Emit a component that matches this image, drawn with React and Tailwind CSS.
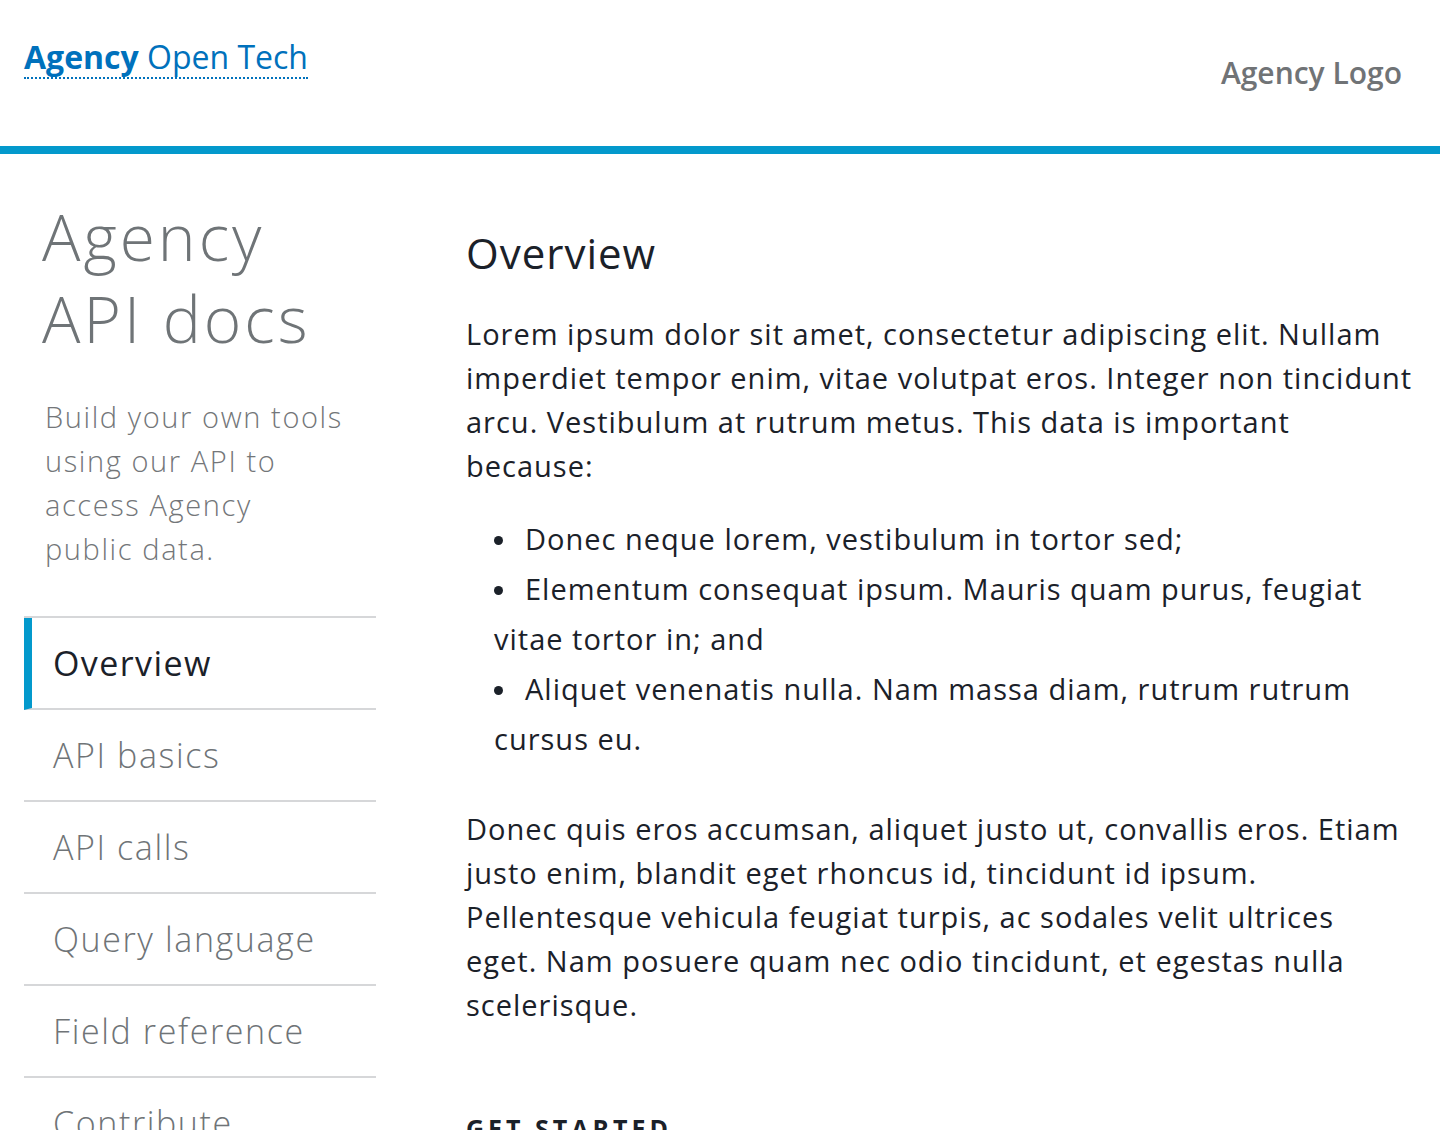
import React from "react";

const navItems = [
  "Overview",
  "API basics",
  "API calls",
  "Query language",
  "Field reference",
  "Contribute",
];

const bullets = [
  "Donec neque lorem, vestibulum in tortor sed;",
  "Elementum consequat ipsum. Mauris quam purus, feugiat vitae tortor in; and",
  "Aliquet venenatis nulla. Nam massa diam, rutrum rutrum cursus eu.",
];

export default function App() {
  return (
    <div className="min-h-[1130px] bg-white font-['Open_Sans',sans-serif] text-[#1b2129]">
      {/* Header */}
      <header className="flex h-[146px] items-start justify-between px-6">
        <a
          href="#"
          className="mt-[38px] border-b-2 border-dotted border-[#0071bc] pb-[1px] text-[32px] leading-[38px] text-[#0071bc]"
        >
          <span className="font-bold">Agency</span> Open Tech
        </a>
        <div className="mr-[14px] mt-[54px] text-[30px] font-semibold leading-[38px] text-[#707376]">
          Agency Logo
        </div>
      </header>
      <div className="h-2 bg-[#0399cc]" />

      <div className="flex gap-[90px] px-6">
        {/* Sidebar */}
        <aside className="w-[352px] shrink-0">
          <h1 className="mt-[42px] pl-[18px] text-[64px] font-light leading-[82px] tracking-[3px] text-[#6f7477]">
            Agency
            <br />
            API docs
          </h1>
          <p className="mt-[35px] pl-[21px] pr-[32px] text-[29px] font-light leading-[44px] tracking-[1.6px] text-[#737679]">
            Build your own tools using our API to access Agency public data.
          </p>
          <nav className="mt-[45px] border-t-2 border-[#d6d7d9]">
            {navItems.map((item, i) => (
              <a
                key={item}
                href="#"
                className={
                  i === 0
                    ? "flex h-[92px] items-center border-b-2 border-l-8 border-[#d6d7d9] border-l-[#0399cc] pl-[21px] text-[34px] tracking-[1.4px] text-[#1b2129]"
                    : "flex h-[92px] items-center border-b-2 border-[#d6d7d9] pl-[29px] text-[34px] font-light tracking-[1.6px] text-[#6f7477]"
                }
              >
                {item}
              </a>
            ))}
          </nav>
        </aside>

        {/* Main content */}
        <main className="min-w-0 flex-1 pr-[3px] pt-[72px] tracking-[1px]">
          <h2 className="text-[42px] leading-[54px]">Overview</h2>
          <p className="mt-[32px] text-[29px] leading-[44px]">
            Lorem ipsum dolor sit amet, consectetur adipiscing elit. Nullam
            imperdiet tempor enim, vitae volutpat eros. Integer non tincidunt
            arcu. Vestibulum at rutrum metus. This data is important because:
          </p>
          <ul className="mt-[26px] pl-[28px] text-[29px] leading-[50px]">
            {bullets.map((b) => (
              <li key={b}>
                <span className="mb-[4px] mr-[22px] inline-block h-[9px] w-[9px] rounded-full bg-[#1b2129] align-middle" />
                {b}
              </li>
            ))}
          </ul>
          <p className="mt-[43px] text-[29px] leading-[44px]">
            Donec quis eros accumsan, aliquet justo ut, convallis eros. Etiam
            justo enim, blandit eget rhoncus id, tincidunt id ipsum. Pellentesque
            vehicula feugiat turpis, ac sodales velit ultrices eget. Nam posuere
            quam nec odio tincidunt, et egestas nulla scelerisque.
          </p>
          <h3 className="mt-[86px] text-[25px] font-bold uppercase leading-[30px] tracking-[4px]">
            Get started
          </h3>
        </main>
      </div>
    </div>
  );
}
